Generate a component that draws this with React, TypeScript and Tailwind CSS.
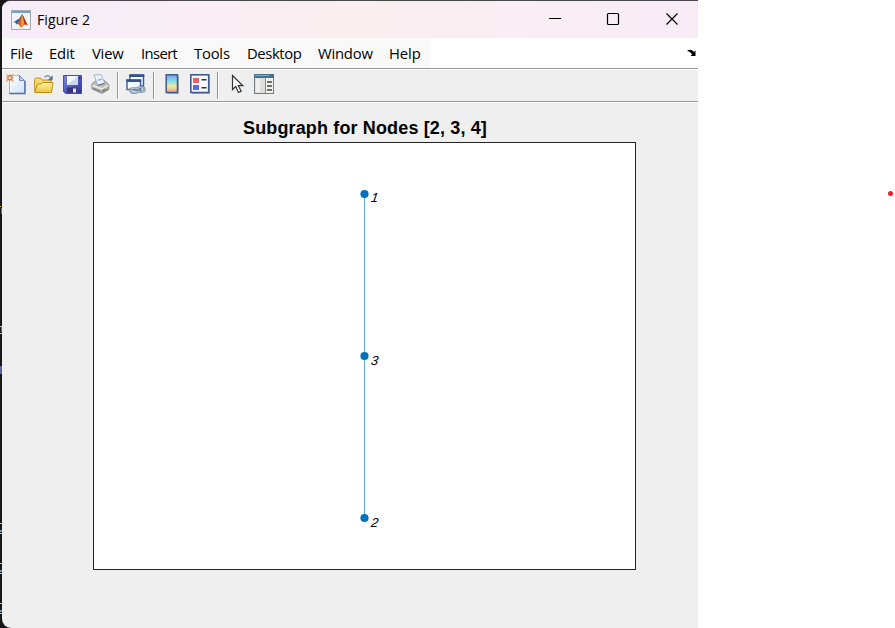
import React from 'react';

const MENU = [
  { label: 'File', box: 'w-[39px]', track: 'tracking-[-0.2px]' },
  { label: 'Edit', box: 'w-[43px]', track: 'tracking-[-0.2px]' },
  { label: 'View', box: 'w-[49px]', track: 'tracking-[-0.2px]' },
  { label: 'Insert', box: 'w-[53px]', track: 'tracking-[-0.6px]' },
  { label: 'Tools', box: 'w-[53px]', track: 'tracking-[-0.2px]' },
  { label: 'Desktop', box: 'w-[71px]', track: 'tracking-[-0.4px]' },
  { label: 'Window', box: 'w-[71px]', track: 'tracking-[-0.2px]' },
  { label: 'Help', box: 'w-[41px]', track: 'tracking-[-0.1px]' },
];

const svgClass = 'block shrink-0';

function Logo() {
  return (
    <svg className={svgClass} width="20" height="20" viewBox="0 0 20 20">
      <rect x=".5" y=".5" width="19" height="19" fill="#f1f3f5" stroke="#a4abb2" />
      <path d="M1 1h18v2H1z" fill="#6fa2c9" />
      <path d="M2.500 12L6 9.700l2 1.200-2.600 2.600z" fill="#4a83b5" />
      <path d="M6 9.700L8 9l3-5-1.300 6.500-3.800 4-1-1.200z" fill="#275c91" />
      <path d="M5.500 13.500C8 12 9 9 11 4c1.800 2 3 7 6 11.500-2-1.400-3.200-1.400-4.600.1-1 1-1.800 1.800-2.900 2-.4-2-1.600-3.600-4-4.100z" fill="#d95b20" />
      <path d="M11 4c-.5 5-1.400 9-1.500 13.500 1.500-1 2.500-3.300 3.700-3.200-.5-3-1-7.400-2.200-10.300z" fill="#f39a36" />
      <path d="M11 4c1.800 2 3 7 6 11.500-1.500-1.100-2.400-1.300-3.200-1.100C13 10 12.500 7 11 4z" fill="#9c2d20" />
    </svg>
  );
}

function NewIcon() {
  return (
    <svg className={svgClass} width="21" height="21" viewBox="0 0 21 21">
      <defs>
        <linearGradient id="sheet" x1="0" y1="0" x2="1" y2="1">
          <stop offset="0" stopColor="#fff" />
          <stop offset="1" stopColor="#cfe2f8" />
        </linearGradient>
      </defs>
      <path d="M3.500 1.500h10l5 5v13h-15z" fill="url(#sheet)" stroke="#a3b4d4" />
      <path d="M3.500 19.500h15.500V7" fill="none" stroke="#4f6ca5" strokeWidth="1.400" />
      <path d="M13.500 1.500v5h5z" fill="#b9d4ef" stroke="#6d88b9" />
      <path d="M0 0l7.500 7.500M7.500 0L0 7.500M3.700 0v8M0 3.800h8" stroke="#e9a27c" strokeWidth="1.100" />
      <rect x="2" y="2" width="3.800" height="3.800" fill="#ffe0a0" stroke="#cd6338" />
    </svg>
  );
}

function OpenIcon() {
  return (
    <svg className={svgClass} width="20" height="20" viewBox="0 0 20 20">
      <defs>
        <linearGradient id="folder" x1="0" y1="0" x2="0" y2="1">
          <stop offset="0" stopColor="#fff6a0" />
          <stop offset="1" stopColor="#efc13f" />
        </linearGradient>
      </defs>
      <path d="M.6 17.500V5.500l1-1.500h5l1.500 2h9v11.500z" fill="#f6d873" stroke="#c0901c" />
      <path d="M.8 18.500L3.500 10h3.500l1.500-1.500h10.500L17.500 18.500z" fill="url(#folder)" stroke="#bd8c17" />
      <path d="M10.500 3.200c2-2.200 4.700-1.900 6.300 1" fill="none" stroke="#8398aa" strokeWidth="1.500" />
      <path d="M18.700 1.200v5h-5z" fill="#587790" />
    </svg>
  );
}

function SaveIcon() {
  return (
    <svg className={svgClass} width="19" height="19" viewBox="0 0 19 19">
      <defs>
        <linearGradient id="disk" x1="0" y1="0" x2="1" y2="1">
          <stop offset="0" stopColor="#7b87e2" />
          <stop offset="1" stopColor="#2c318f" />
        </linearGradient>
      </defs>
      <path d="M.5.500h18v18h-16l-2-2z" fill="url(#disk)" stroke="#4a4ca5" />
      <path d="M4 1h11v9H4z" fill="#f4f8fd" />
      <path d="M4 10L15 1v9z" fill="#c9d9ee" />
      <path d="M4 12.500h10V18H4z" fill="#34377d" />
      <path d="M10 13.500h3v4h-3z" fill="#e3e7f6" />
      <path d="M16 2h1.500v2H16z" fill="#22286f" />
    </svg>
  );
}

function PrintIcon() {
  return (
    <svg className={svgClass} width="19" height="20" viewBox="0 0 19 20">
      <path d="M.8 10l4-3.500 9 0 4 4v5l-7 4L1 15z" fill="#bdbdb9" stroke="#969696" />
      <path d="M3 1l7-.5 4 9-7 2z" fill="#e9f4ff" stroke="#9fb6cd" />
      <path d="M7 6l4-.8" stroke="#8eb6e3" strokeWidth="1.500" />
      <path d="M1.500 11.500l9.500 3.500 6-3.500" fill="none" stroke="#e6e6e3" strokeWidth="2" />
      <path d="M11 16v3l6.500-3.500v-3z" fill="#858583" />
      <path d="M1.500 14l8.500 3.500" stroke="#888" strokeWidth="1.500" />
      <path d="M6.500 11.500l7-2.200" stroke="#666" strokeWidth="1.200" />
      <path d="M14.500 14h2" stroke="#d7e873" strokeWidth="1.500" />
    </svg>
  );
}

function LinkIcon() {
  return (
    <svg className={svgClass} width="20" height="21" viewBox="0 0 20 21">
      <rect x="4" y="1" width="13.500" height="11" fill="#f8fbff" stroke="#395a94" strokeWidth="1.400" />
      <path d="M3.300.5h15v2.500h-15z" fill="#31558e" />
      <rect x="1" y="6" width="13.500" height="9.500" fill="#f4f9ff" stroke="#395a94" strokeWidth="1.400" />
      <path d="M.3 5.500h15V8H.3z" fill="#31558e" />
      <g fill="none" strokeLinecap="round">
        <rect x="4.500" y="14.300" width="7.500" height="4.500" rx="2.200" stroke="#7d90a2" strokeWidth="2.200" />
        <rect x="11.500" y="13.300" width="7" height="4.500" rx="2.200" stroke="#7d90a2" strokeWidth="2.200" />
        <rect x="4.500" y="14.300" width="7.500" height="4.500" rx="2.200" stroke="#b9cad9" strokeWidth="1" />
        <rect x="11.500" y="13.300" width="7" height="4.500" rx="2.200" stroke="#b9cad9" strokeWidth=".8" />
        <path d="M8 16.300h7.500" stroke="#7890a8" strokeWidth="1.500" />
      </g>
    </svg>
  );
}

function ColorbarIcon() {
  return (
    <svg className={svgClass} width="14" height="20" viewBox="0 0 14 20">
      <defs>
        <linearGradient id="spectrum" x1="0" y1="0" x2="0" y2="1">
          <stop offset="0" stopColor="#879ce8" />
          <stop offset=".35" stopColor="#80dce8" />
          <stop offset=".65" stopColor="#f2eb9b" />
          <stop offset="1" stopColor="#ee9b87" />
        </linearGradient>
      </defs>
      <path d="M2 19.500h11.500V2" fill="none" stroke="#b0b1b5" />
      <rect x="1.200" y=".8" width="11.300" height="17.700" fill="url(#spectrum)" stroke="#405a91" strokeWidth="1.500" />
    </svg>
  );
}

function LegendIcon() {
  return (
    <svg className={svgClass} width="20" height="20" viewBox="0 0 20 20">
      <path d="M2 19.500h17.500V2" fill="none" stroke="#aaafba" />
      <rect x=".8" y=".8" width="17.900" height="17.700" fill="#f7f9ff" stroke="#3f5b91" strokeWidth="1.600" />
      <path d="M3 4h6v5H3z" fill="#e36567" />
      <path d="M3 11h6v5H3z" fill="#6468df" />
      <path d="M11.500 5.700h5M11.500 13.700h5" stroke="#333" strokeWidth="1.400" />
    </svg>
  );
}

function ArrowIcon() {
  return (
    <svg className={svgClass} width="13" height="20" viewBox="0 0 13 20">
      <path d="M1.500 1.500v14l3.200-3 2.800 6 2.700-1.300-2.900-5.500h4.500z" fill="#fff" stroke="#333" strokeWidth="1.200" />
    </svg>
  );
}

function InspectorIcon() {
  return (
    <svg className={svgClass} width="20" height="20" viewBox="0 0 20 20">
      <rect x=".5" y=".5" width="19" height="19" fill="#f0f0ee" stroke="#727d84" />
      <path d="M0 0h20v4H0z" fill="#47728f" />
      <path d="M1 1h14v1H1z" fill="#84aac2" />
      <path d="M1 4h10v15H1z" fill="#dededb" />
      <path d="M2 5h4v13H2z" fill="#efefed" />
      <path d="M11.500 4v15" stroke="#888" />
      <path d="M13 8h5M13 12h5M13 16h5" stroke="#444" strokeWidth="1.500" />
    </svg>
  );
}

function Separator() {
  return <div className="h-[27px] w-[2px] shrink-0 border-l border-[#969696] bg-white" />;
}

function Graph() {
  return (
    <svg className="block" width="541" height="426" viewBox="94 143 541 426">
      <path d="M364.500 194v324" stroke="#66aad7" />
      <g fill="#0072bd">
        <circle cx="364.500" cy="194" r="4.100" />
        <circle cx="364.500" cy="356" r="4.100" />
        <circle cx="364.500" cy="518" r="4.100" />
      </g>
      <g fill="#000" className="font-['Liberation_Sans',Arial,sans-serif] text-[13px] italic">
        <text transform="translate(370.500 202) skewX(-8)">1</text>
        <text transform="translate(370.500 365) skewX(-8)">3</text>
        <text transform="translate(370.500 527) skewX(-8)">2</text>
      </g>
    </svg>
  );
}

function DesktopEdge() {
  return (
    <svg className="absolute inset-0" width="698" height="628" viewBox="0 0 698 628">
      <path d="M0 206.500h1" stroke="#e0cc4d" />
      <path d="M1.500 208v6M1.500 327v5" stroke="#4f6f96" />
      <path d="M0 326.500h2M0 333.500h2M0 523.500h2M0 533.500h2M0 563.500h2M0 573.500h2M0 603.500h2M0 613.500h2" stroke="#c7c7c7" />
      <path d="M1 366v8" stroke="#5663a8" strokeWidth="2" />
      <path d="M0 531.500h2M0 571.500h2M0 611.500h2" stroke="#bd7149" />
      <path d="M0 530.500h2M0 570.500h2M0 610.500h2" stroke="#6fa0bd" />
    </svg>
  );
}

export default function App() {
  return (
    <main className="flex h-[628px] w-[895px] overflow-hidden bg-white font-['Open_Sans','Noto_Sans',sans-serif] text-black">
      <div className="relative h-full w-[698px] shrink-0 bg-[#171719] pl-[2px]">
        <DesktopEdge />
        <section className="relative flex h-full flex-col overflow-hidden rounded-l-[9px] border-t border-[#4b474a] bg-[#efefef]">
          <header className="flex h-[37px] shrink-0 items-center bg-linear-to-r from-[#f7edf9] via-[#f9eff0] to-[#f8edf7] pl-[9px]">
            <Logo />
            <h1 className="ml-[6px] grow text-[14px] leading-[20px] font-normal tracking-[0.12px]">Figure 2</h1>
            <svg className="block" width="150" height="37" viewBox="548 1 150 37" fill="none" stroke="#000" strokeWidth="1.200">
              <path d="M549 18.500h12" />
              <rect x="607.500" y="13.500" width="11" height="11" rx="1" />
              <path d="M666.500 13.500l11 11M677.500 13.500l-11 11" />
            </svg>
          </header>
          <nav className="flex h-[30px] shrink-0 items-center bg-white">
            <div className="flex h-full w-[428px] items-center bg-[#f9f9f9] pl-[8px]">
              {MENU.map((m) => (
                <span key={m.label} className={`shrink-0 text-[14.8px] leading-[20px] whitespace-nowrap ${m.box} ${m.track}`}>
                  {m.label}
                </span>
              ))}
            </div>
            <svg className="mr-[1px] ml-auto block" width="10" height="8" viewBox="0 0 10 8">
              <path d="M0 2Q3-.5 6 2l1 1 1.500-1.500V7H3.500L5 5.500l-.8-1.300Q3 2.200 0 2z" fill="#000" />
            </svg>
          </nav>
          <div className="flex h-[34px] shrink-0 items-center border-y border-[#969696] pb-[2px] pl-[4px] shadow-[inset_0_1px_#fff]">
            <NewIcon />
            <div className="ml-[7px]"><OpenIcon /></div>
            <div className="ml-[9px]"><SaveIcon /></div>
            <div className="ml-[9px]"><PrintIcon /></div>
            <div className="mt-[2px] ml-[7px]"><Separator /></div>
            <div className="ml-[7px]"><LinkIcon /></div>
            <div className="mt-[2px] ml-[7px]"><Separator /></div>
            <div className="ml-[10px]"><ColorbarIcon /></div>
            <div className="ml-[11px]"><LegendIcon /></div>
            <div className="mt-[2px] ml-[7px]"><Separator /></div>
            <div className="ml-[12px]"><ArrowIcon /></div>
            <div className="ml-[10px]"><InspectorIcon /></div>
          </div>
          <div className="grow border-t border-white pt-[15px]">
            <h2 className="ml-[91px] w-[543px] pl-[1px] text-center font-['Liberation_Sans',Arial,sans-serif] text-[18px] leading-[20px] font-bold tracking-[0.14px] whitespace-nowrap">
              Subgraph for Nodes [2, 3, 4]
            </h2>
            <div className="mt-[4px] ml-[91px] h-[428px] w-[543px] border border-[#262626] bg-white">
              <Graph />
            </div>
          </div>
        </section>
      </div>
      <aside className="flex grow items-start justify-end pt-[191px] pr-[2px]">
        <span className="size-[5px] rounded-full bg-[#ed1c24]" />
      </aside>
    </main>
  );
}
